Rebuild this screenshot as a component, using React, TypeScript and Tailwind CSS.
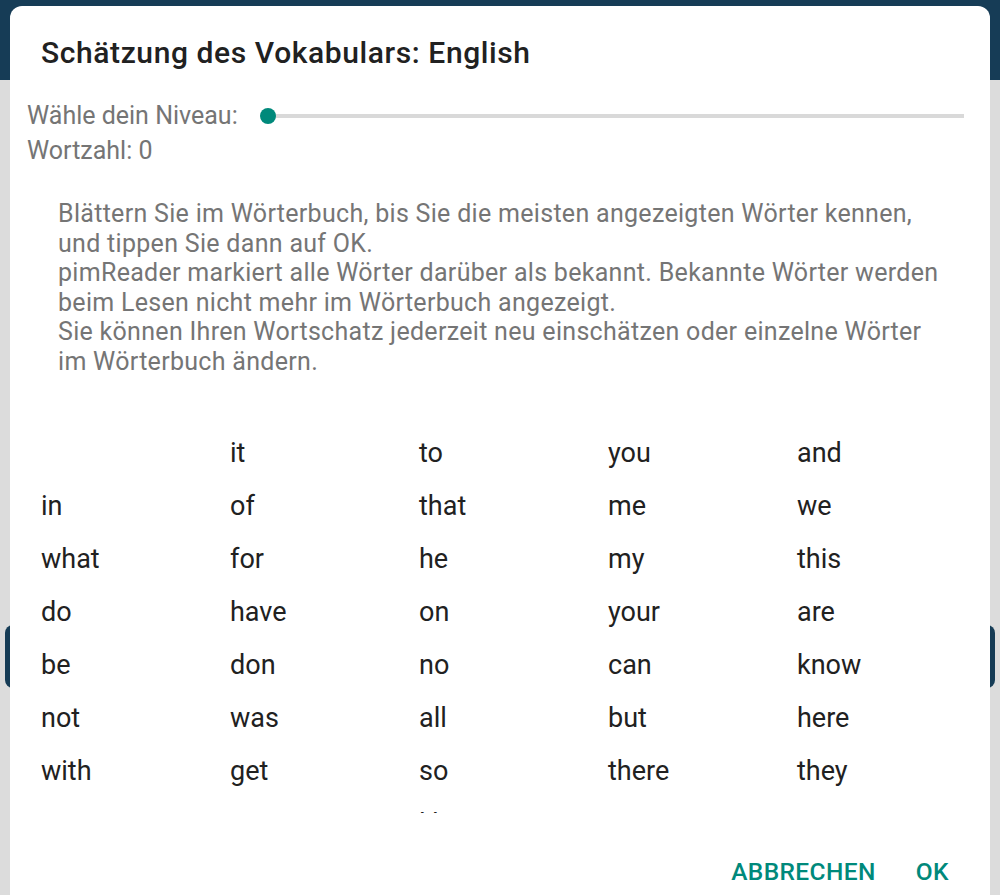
import React from 'react';

const words = [
  '', 'it', 'to', 'you', 'and',
  'in', 'of', 'that', 'me', 'we',
  'what', 'for', 'he', 'my', 'this',
  'do', 'have', 'on', 'your', 'are',
  'be', 'don', 'no', 'can', 'know',
  'not', 'was', 'all', 'but', 'here',
  'with', 'get', 'so', 'there', 'they',
  'now', 'one', 'like', 'are', 'go',
];

const hint = [
  'Blättern Sie im Wörterbuch, bis Sie die meisten angezeigten Wörter kennen,',
  'und tippen Sie dann auf OK.',
  'pimReader markiert alle Wörter darüber als bekannt. Bekannte Wörter werden',
  'beim Lesen nicht mehr im Wörterbuch angezeigt.',
  'Sie können Ihren Wortschatz jederzeit neu einschätzen oder einzelne Wörter',
  'im Wörterbuch ändern.',
];

function LevelSlider() {
  return (
    <div className="relative flex-1 h-[16px] ml-[22px] mr-[26px]">
      <div className="absolute left-[8px] right-0 top-[6px] h-[4px] bg-[#d9d9d9]" />
      <div className="absolute left-0 top-0 w-[16px] h-[16px] rounded-full bg-[#00897b]" />
    </div>
  );
}

export default function App() {
  return (
    <div
      className="relative w-[1000px] h-[895px] overflow-hidden bg-[#dcdcdc]"
      style={{ fontFamily: 'Roboto, "Noto Sans", sans-serif' }}
    >
      {/* app behind the scrim */}
      <div className="h-[80px] bg-[#163c56]" />
      <div className="pt-[545px] px-[5px]">
        <div className="h-[63px] rounded-[8px] bg-[#163c56]" />
      </div>

      {/* dialog */}
      <div className="absolute left-[10px] top-[6px] w-[980px] h-[930px] bg-white rounded-[12px] flex flex-col">
        <div className="pt-[29px] pl-[31px] h-[65px] text-[30px] leading-[36px] tracking-[0.6px] font-medium text-[#212121] whitespace-nowrap">
          Schätzung des Vokabulars: English
        </div>

        <div className="mt-[28px] h-[34px] flex items-center pl-[17px] text-[25px] text-[#757575]">
          <span className="whitespace-nowrap">Wähle dein Niveau:</span>
          <LevelSlider />
        </div>
        <div className="mt-[1px] h-[34px] flex items-center pl-[17px] text-[25px] text-[#757575]">
          Wortzahl: 0
        </div>

        <div className="mt-[31px] pl-[48px] text-[25px] tracking-[0.3px] leading-[29.5px] text-[#757575]">
          {hint.map((line, i) => (
            <div key={i} className="whitespace-nowrap">{line}</div>
          ))}
        </div>

        <div className="mt-[51px] h-[386px] overflow-hidden pl-[31px]">
          <div className="grid grid-cols-[repeat(5,189px)]">
            {words.map((w, i) => (
              <div key={i} className="h-[53px] flex items-center text-[27px] text-[#212121]">
                {w}
              </div>
            ))}
          </div>
        </div>

        <div className="mt-[35px] h-[48px] flex items-center justify-end gap-[40px] pr-[41px] text-[24.5px] tracking-[0.4px] font-medium text-[#00897b]">
          <span>ABBRECHEN</span>
          <span>OK</span>
        </div>
      </div>
    </div>
  );
}
